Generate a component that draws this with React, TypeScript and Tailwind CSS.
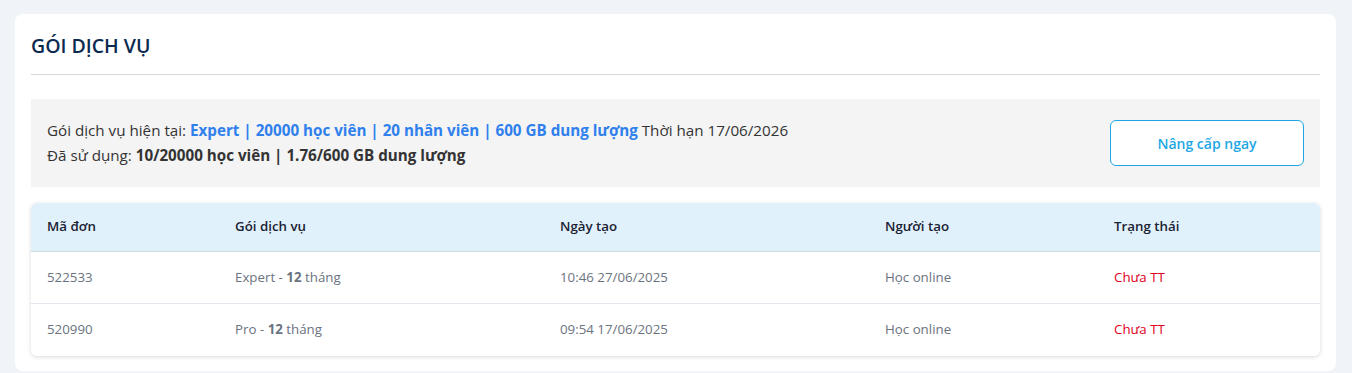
import React from "react";

type Order = {
  id: string;
  plan: string;
  months: number;
  createdAt: string;
  createdBy: string;
  status: string;
};

const orders: Order[] = [
  { id: "522533", plan: "Expert", months: 12, createdAt: "10:46 27/06/2025", createdBy: "Học online", status: "Chưa TT" },
  { id: "520990", plan: "Pro", months: 12, createdAt: "09:54 17/06/2025", createdBy: "Học online", status: "Chưa TT" },
];

const cols = "grid grid-cols-[188px_325px_325px_229px_1fr]";

export default function App() {
  return (
    <div className="min-h-[373px] bg-[#f0f4f8] pt-[14px] pl-[15px] pr-[16px] font-['Open_Sans','Noto_Sans',sans-serif]">
      <div className="bg-white rounded-[8px] px-4 pb-[15px]">
        <div className="pt-[18px] pb-[14px] border-b border-[#d6d9e0]">
          <h1 className="text-[19.5px] leading-[28px] font-semibold text-[#0b2a50]">GÓI DỊCH VỤ</h1>
        </div>

        <div className="mt-6 bg-[#f4f4f4] h-[88px] flex items-center justify-between px-4">
          <div className="text-[15.2px] leading-[25px] text-[#333]">
            <div>
              Gói dịch vụ hiện tại:{" "}
              <span className="font-bold text-[#2f80ed]">
                Expert | 20000 học viên | 20 nhân viên | 600 GB dung lượng
              </span>{" "}
              Thời hạn 17/06/2026
            </div>
            <div>
              Đã sử dụng: <span className="font-bold">10/20000 học viên | 1.76/600 GB dung lượng</span>
            </div>
          </div>
          <button className="w-[194px] h-[46px] rounded-[6px] border border-[#1ea7e4] bg-white text-[14px] font-semibold text-[#1ea7e4]">
            Nâng cấp ngay
          </button>
        </div>

        <div className="mt-4 rounded-[6px] bg-white shadow-[0_1px_4px_rgba(0,0,0,0.15)] overflow-hidden text-[13.3px]">
          <div className={`${cols} bg-[#e1f1fc] h-[49px] items-center px-4 font-semibold text-[#1a2233] border-b border-[#cfd8e3]`}>
            <div>Mã đơn</div>
            <div>Gói dịch vụ</div>
            <div>Ngày tạo</div>
            <div>Người tạo</div>
            <div>Trạng thái</div>
          </div>
          {orders.map((o, i) => (
            <div
              key={o.id}
              className={`${cols} h-[52px] items-center px-4 text-[#6b7380] ${i < orders.length - 1 ? "border-b border-[#e3e8ef]" : ""}`}
            >
              <div>{o.id}</div>
              <div>
                {o.plan} - <span className="font-bold">{o.months}</span> tháng
              </div>
              <div>{o.createdAt}</div>
              <div>{o.createdBy}</div>
              <div className="text-[#e0001b]">{o.status}</div>
            </div>
          ))}
        </div>
      </div>
    </div>
  );
}
